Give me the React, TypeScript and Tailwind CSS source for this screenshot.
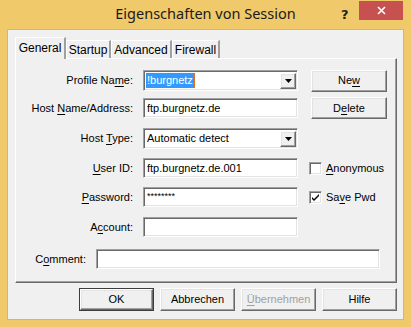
import React from "react";

const font = "font-['Liberation_Sans',Arial,sans-serif]";
const sunken =
  "border border-t-[#a0a0a0] border-l-[#a0a0a0] border-r-white border-b-white shadow-[inset_1px_1px_0_#696969,inset_-1px_-1px_0_#e3e3e3] bg-white";
const raised =
  "border border-t-white border-l-white border-r-[#696969] border-b-[#696969] shadow-[inset_-1px_-1px_0_#a0a0a0,inset_1px_1px_0_#e3e3e3] bg-[#f0f0f0]";

const U = ({ children }: { children: React.ReactNode }) => (
  <span className="underline underline-offset-[2px]">{children}</span>
);

const Label = ({ children, w = 127 }: { children: React.ReactNode; w?: number }) => (
  <div
    className="shrink-0 pr-[10px] text-right text-[11px] text-black"
    style={{ width: w }}
  >
    {children}
  </div>
);

const Field = ({ value, w = 155, mono }: { value?: string; w?: number; mono?: boolean }) => (
  <div
    className={`flex h-[20px] items-center px-[3px] text-[11px] text-black ${sunken}`}
    style={{ width: w }}
  >
    <span className={mono ? "text-[9px]" : ""}>{value}</span>
  </div>
);

const DropArrow = () => (
  <div className={`flex h-[16px] w-[16px] items-center justify-center ${raised}`}>
    <svg width="7" height="4" viewBox="0 0 7 4">
      <path d="M0 0h7L3.5 4z" fill="#000" />
    </svg>
  </div>
);

const Combo = ({ children }: { children: React.ReactNode }) => (
  <div
    className={`flex h-[21px] w-[155px] items-center justify-between pl-[2px] pr-[1px] text-[11px] text-black ${sunken}`}
  >
    {children}
    <DropArrow />
  </div>
);

const Btn = ({
  children,
  w = 76,
  h = 22,
  def,
  disabled,
}: {
  children: React.ReactNode;
  w?: number;
  h?: number;
  def?: boolean;
  disabled?: boolean;
}) => (
  <div
    className={`flex shrink-0 items-center justify-center text-[11px] ${
      def ? "border border-[#3c3c3c]" : ""
    }`}
    style={{ width: w, height: h }}
  >
    <div
      className={`flex h-full w-full items-center justify-center ${raised} ${
        disabled ? "text-[#a0a0a0]" : "text-black"
      }`}
    >
      {children}
    </div>
  </div>
);

const Check = ({ checked, children }: { checked?: boolean; children: React.ReactNode }) => (
  <div className="flex items-center gap-[4px] text-[11px] text-black">
    <div className={`flex h-[13px] w-[13px] items-center justify-center ${sunken}`}>
      {checked && (
        <svg width="7" height="7" viewBox="0 0 7 7">
          <path d="M0 3l2 2 5-5v2L2 7 0 5z" fill="#000" />
        </svg>
      )}
    </div>
    <span>{children}</span>
  </div>
);

const Tab = ({ children, active, w }: { children: React.ReactNode; active?: boolean; w: number }) => (
  <div
    className={`flex items-center justify-center border-l border-t border-l-white border-t-white border-r-2 border-r-[#a0a0a0] bg-[#f0f0f0] text-[12px] text-black ${
      active ? "relative z-10 -mb-px h-[22px] pb-[2px]" : "h-[18px]"
    }`}
    style={{ width: w }}
  >
    {children}
  </div>
);

export default function App() {
  return (
    <div className={`relative h-[327px] w-[411px] bg-[#f0c96b] ${font}`}>
      <div className="flex h-[30px] items-center justify-center pb-[2px] font-['Noto_Sans',sans-serif] text-[14.5px] text-[#1a1a1a]">
        Eigenschaften von Session
      </div>
      <div className="absolute left-[341px] top-[5px] font-['DejaVu_Sans',sans-serif] text-[13px] font-bold text-[#222]">
        ?
      </div>
      <div className="absolute left-[359px] top-[1px] flex h-[19px] w-[44px] items-center justify-center bg-[#c75050]">
        <svg width="9" height="9" viewBox="0 0 9 9">
          <path d="M1 1l7 7M8 1l-7 7" stroke="#fff" strokeWidth="1.6" />
        </svg>
      </div>

      <div className="ml-[8px] h-[289px] w-[395px] bg-[#f0f0f0] shadow-[0_0_0_1px_#dcb55c]">
        <div className="flex items-end pl-[7px] pt-[7px]">
          <Tab active w={51}>General</Tab>
          <Tab w={45}>Startup</Tab>
          <Tab w={61}>Advanced</Tab>
          <Tab w={48}>Firewall</Tab>
        </div>
        <div className="ml-[7px] h-[225px] w-[382px] border-l border-t border-l-white border-t-white border-r border-b border-r-[#696969] border-b-[#696969] shadow-[inset_-1px_-1px_0_#a0a0a0]">
          <div className="mt-[11px] flex h-[21px] items-center">
            <Label>
              Profile Na<U>m</U>e:
            </Label>
            <Combo>
              <span className="flex h-[15px] items-center border-r border-r-[#e07020] bg-[#3399ff] pl-[1px] pr-[1px] text-white">
                !burgnetz
              </span>
            </Combo>
            <div className="ml-[13px]">
              <Btn>
                Ne<U>w</U>
              </Btn>
            </div>
          </div>
          <div className="mt-[7px] flex h-[20px] items-center">
            <Label>
              Host <U>N</U>ame/Address:
            </Label>
            <Field value="ftp.burgnetz.de" />
            <div className="ml-[13px]">
              <Btn>
                D<U>e</U>lete
              </Btn>
            </div>
          </div>
          <div className="mt-[10px] flex h-[21px] items-center">
            <Label>
              Host <U>T</U>ype:
            </Label>
            <Combo>
              <span className="pl-[1px]">Automatic detect</span>
            </Combo>
          </div>
          <div className="mt-[9px] flex h-[20px] items-center">
            <Label>
              <U>U</U>ser ID:
            </Label>
            <Field value="ftp.burgnetz.de.001" />
            <div className="ml-[11px]">
              <Check>
                <U>A</U>nonymous
              </Check>
            </div>
          </div>
          <div className="mt-[9px] flex h-[20px] items-center">
            <Label>
              <U>P</U>assword:
            </Label>
            <Field value="********" mono />
            <div className="ml-[11px]">
              <Check checked>
                Sa<U>v</U>e Pwd
              </Check>
            </div>
          </div>
          <div className="mt-[10px] flex h-[20px] items-center">
            <Label>
              A<U>c</U>count:
            </Label>
            <Field />
          </div>
          <div className="mt-[12px] flex h-[20px] items-center">
            <Label w={80}>
              C<U>o</U>mment:
            </Label>
            <Field w={284} />
          </div>
        </div>
        <div className="mt-[5px] flex gap-[6px] pl-[71px]">
          <Btn w={75} h={23} def>
            OK
          </Btn>
          <Btn w={75} h={23}>
            Abbrechen
          </Btn>
          <Btn w={75} h={23} disabled>
            <U>Ü</U>bernehmen
          </Btn>
          <Btn w={75} h={23}>
            Hilfe
          </Btn>
        </div>
      </div>
    </div>
  );
}
